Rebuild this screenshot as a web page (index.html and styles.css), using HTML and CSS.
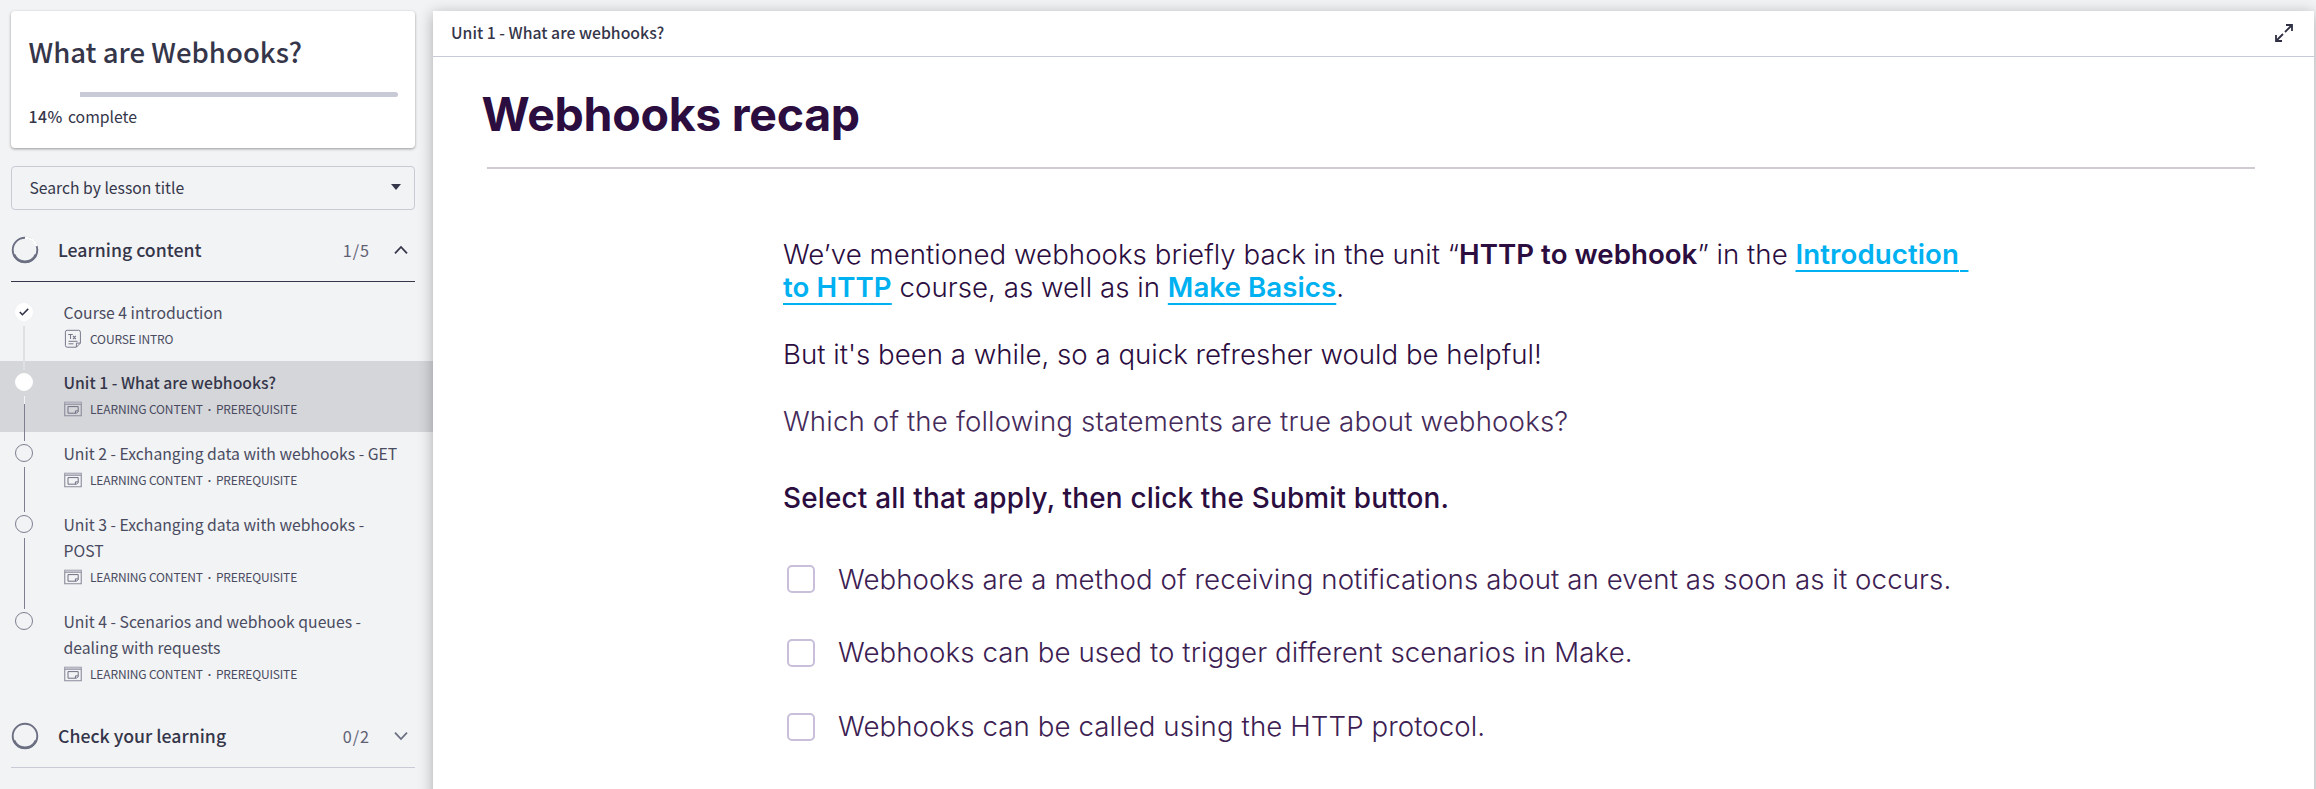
FILE: index.html
```html
<!DOCTYPE html>
<html lang="en">
<head>
<meta charset="utf-8">
<title>What are Webhooks?</title>
<link rel="stylesheet" href="styles.css">
</head>
<body>
<svg class="defs" width="0" height="0">
  <symbol id="lesson" viewBox="0 0 18 16"><path d="M.75 1.25h16.5v13.5H.75zM.75 3.2h16.5" fill="none" stroke="#8b8c9b" stroke-width="1.1"/><path d="M.75 1.2h16.5v1.6H.75z" fill="#b9bac6"/><path d="M4 5.6h10.2v5l-1.6 1.6H4z M11.4 12.2V9.9h2.8" fill="none" stroke="#6f7083" stroke-width="1"/></symbol>
</svg>
<div class="app">
  <aside class="sidebar">
    <section class="card">
      <h1>What are Webhooks?</h1>
      <div class="progress"><div class="rest"></div></div>
      <p class="complete"><b>14%</b> complete</p>
    </section>
    <div class="search"><span>Search by lesson title</span><i class="caret"></i></div>
    <div class="group open">
      <svg class="ring" width="28" height="28" viewBox="0 0 28 28"><circle cx="14" cy="14" r="12.3" fill="none" stroke="#6c6f82" stroke-width="1.9"/><path d="M3 18.5a12 12 0 0 0 22 0" fill="none" stroke="#6c6f82" stroke-width="2.6"/><path d="M14 1.7A12.3 12.3 0 0 1 25.7 10.2" fill="none" stroke="#fff" stroke-width="2.4"/></svg>
      <h2>Learning content</h2><span class="count">1/5</span>
      <svg class="chev" width="14" height="10" viewBox="0 0 14 10"><path d="M1 8.3 7 2l6 6.3" fill="none" stroke="#35364a" stroke-width="1.8"/></svg>
    </div>
    <ul class="lessons">
      <li class="done">
        <div class="rail"><i class="dot"><svg width="10" height="8" viewBox="0 0 10 8"><path d="M.8 4 3.4 6.7 9.2.9" fill="none" stroke="#2f3044" stroke-width="1.5"/></svg></i><i class="line"></i></div>
        <div class="info"><h3>Course 4 introduction</h3>
        <p class="meta"><svg width="18" height="20" viewBox="0 0 18 20"><path d="M3.2 1.3h11.4a1.8 1.8 0 0 1 1.8 1.8v11l-4 4.1H3.2a1.8 1.8 0 0 1-1.8-1.8V3.1a1.8 1.8 0 0 1 1.8-1.8zM12.4 18v-3.9h4M4.5 12.3h9M4.5 14.8h5" fill="none" stroke="#77788a" stroke-width="1"/><path d="M4.2 5.5h4.6M6.5 5.5V10M9 7l2.8 3M11.8 7 9 10" fill="none" stroke="#77788a" stroke-width="1.1"/></svg><span>COURSE INTRO</span></p></div>
      </li>
      <li class="current">
        <div class="rail"><i class="dot"></i><i class="line"></i></div>
        <div class="info"><h3>Unit 1 - What are webhooks?</h3><p class="meta"><svg width="18" height="16"><use href="#lesson"/></svg><span>LEARNING CONTENT<em>·</em>PREREQUISITE</span></p></div>
      </li>
      <li>
        <div class="rail"><i class="dot"></i><i class="line"></i></div>
        <div class="info"><h3>Unit 2 - Exchanging data with webhooks - GET</h3><p class="meta"><svg width="18" height="16"><use href="#lesson"/></svg><span>LEARNING CONTENT<em>·</em>PREREQUISITE</span></p></div>
      </li>
      <li>
        <div class="rail"><i class="dot"></i><i class="line"></i></div>
        <div class="info"><h3>Unit 3 - Exchanging data with webhooks -<br>POST</h3><p class="meta"><svg width="18" height="16"><use href="#lesson"/></svg><span>LEARNING CONTENT<em>·</em>PREREQUISITE</span></p></div>
      </li>
      <li>
        <div class="rail"><i class="dot"></i></div>
        <div class="info"><h3>Unit 4 - Scenarios and webhook queues -<br>dealing with requests</h3><p class="meta"><svg width="18" height="16"><use href="#lesson"/></svg><span>LEARNING CONTENT<em>·</em>PREREQUISITE</span></p></div>
      </li>
    </ul>
    <div class="group">
      <svg class="ring" width="28" height="28" viewBox="0 0 28 28"><circle cx="14" cy="14" r="12.3" fill="none" stroke="#6c6f82" stroke-width="1.9"/><path d="M3 18.5a12 12 0 0 0 22 0" fill="none" stroke="#6c6f82" stroke-width="2.6"/></svg>
      <h2>Check your learning</h2><span class="count">0/2</span>
      <svg class="chev" width="14" height="10" viewBox="0 0 14 10"><path d="M1 1.7 7 8l6-6.3" fill="none" stroke="#6c6f82" stroke-width="1.8"/></svg>
    </div>
  </aside>
  <main class="panel">
    <header class="bar"><span>Unit 1 - What are webhooks?</span>
      <svg width="20" height="20" viewBox="0 0 20 20"><path d="M12 2h6v6M17.5 2.5 11 9M8 18H2v-6M2.500 17.500 9 11" fill="none" stroke="#2f3044" stroke-width="1.8"/></svg>
    </header>
    <h1 class="title"><span>Webhooks recap</span></h1>
    <div class="body">
      <p class="intro">We’ve mentioned webhooks briefly back in the unit “<b>HTTP to webhook</b>” in the <a>Introduction</a><a class="gap">&nbsp;</a><br><a>to HTTP</a> course, as well as in <a>Make Basics</a>.</p>
      <p class="while">But it's been a while, so a quick refresher would be helpful!</p>
      <p class="question">Which of the following statements are true about webhooks?</p>
      <p class="select">Select all that apply, then click the Submit button.</p>
      <label class="option"><i></i><span>Webhooks are a method of receiving notifications about an event as soon as it occurs.</span></label>
      <label class="option"><i></i><span>Webhooks can be used to trigger different scenarios in Make.</span></label>
      <label class="option"><i></i><span>Webhooks can be called using the HTTP protocol.</span></label>
    </div>
  </main>
</div>
</body>
</html>
```
FILE: styles.css
```css
* { box-sizing: border-box; margin: 0; padding: 0; }
body { background: #f1f3f5; color: #35364a; font-family: "Noto Sans CJK SC", "Noto Sans CJK JP", sans-serif; overflow: hidden; }
.defs { display: block; }
h1, h2, h3 { font-weight: 400; }
i, em { font-style: normal; }
.app { display: flex; height: 789px; padding-top: 11px; overflow: hidden; }
.sidebar { width: 433px; flex: none; }

/* Course summary */
.card { width: 404px; height: 137px; margin-left: 11px; padding: 20px 17px 0 17.5px; background: #fff; border-radius: 4px; box-shadow: 0 1px 3px rgba(0,0,0,.38); }
.card h1 { font-size: 27.55px; line-height: 41px; font-weight: 500; white-space: nowrap; }
.progress { margin-top: 20px; display: flex; justify-content: flex-end; }
.rest { width: 318px; height: 5px; background: #c8cad5; border-radius: 0 3px 3px 0; }
.complete { margin-top: 8px; font-size: 15.8px; line-height: 24px; word-spacing: 1.5px; }
.complete b { font-weight: 500; letter-spacing: .5px; }
.search { width: 404px; height: 44px; margin: 18px 0 0 11px; border: 1px solid #c8cad5; border-radius: 4px; padding: 0 13px 2px 17.5px; display: flex; align-items: center; justify-content: space-between; font-size: 15.7px; }
.caret { border: 5px solid transparent; border-top: 6px solid #35364a; border-bottom: 0; }

/* Lesson groups */
.group { display: flex; align-items: center; width: 404px; height: 72px; margin-left: 11px; padding: 8px 7px 0 0; border-bottom: 1px solid #c8cad5; }
.group.open { border-color: #35364a; }
.group h2 { margin-left: 19px; flex: 1; font-size: 17.7px; line-height: 26px; margin-top: -1px; font-weight: 500; }
.count { font-size: 16.2px; letter-spacing: 1px; color: #5f6073; margin-right: -1px; }
.chev { margin-left: 25px; }
.lessons { list-style: none; padding-top: 9px; }
.lessons li { display: flex; padding-left: 15px; }
.rail { display: flex; flex-direction: column; align-items: center; width: 18px; padding-top: 12px; }
.dot { width: 18px; height: 18px; border: 1px solid #7d7e90; border-radius: 50%; display: flex; align-items: center; justify-content: center; }
.done .dot, .current .dot { background: #fff; border-color: #fff; }
.line { width: 1px; flex: 1; margin: 5px 0 -9px; background: #7d7e90; position: relative; }
.done .line { width: 2px; background: #dfe0e4; }
.current .line { background: linear-gradient(#f1f3f5 8px, #7d7e90 8px); }
.info { padding: 9px 0 11px 30.5px; color: #4a4b60; }
.info h3 { font-size: 15.76px; line-height: 26.4px; white-space: nowrap; }
.lessons .current { background: #d5d6da; height: 71px; }
.current h3 { font-weight: 500; color: #35364a; }
.meta { display: flex; align-items: center; gap: 8.5px; height: 23px; margin-top: 1px; font-size: 12px; line-height: 23px; letter-spacing: -.15px; }
.meta em { display: inline-block; width: 13px; text-align: center; font-family: "Open Sans", sans-serif; font-weight: 700; }

/* Lesson panel */
.panel { width: 1881px; height: 800px; background: #fff; box-shadow: 0 3px 14px rgba(0,0,0,.3); }
.bar { display: flex; align-items: center; justify-content: space-between; height: 46px; padding: 0 20px 2px 18px; border-bottom: 1px solid #c8cad5; font-size: 15.8px; font-weight: 500; }
.title { margin: 0 59px 0 53.5px; height: 112px; border-bottom: 2px solid #d0cbd0; font: 700 46.5px/115px Inter, sans-serif; color: #2b0d40; }
.title span { margin-left: -5px; white-space: nowrap; letter-spacing: -.3px; }
.body { padding: 69px 0 0 350px; font: 300 27.65px/33.3px Inter, sans-serif; color: #2b0d40; white-space: nowrap; }
.body b { font-weight: 600; }
.body a { font-weight: 600; color: #00b1f1; letter-spacing: .08px; text-decoration: underline 2px; text-underline-offset: 5.5px; text-decoration-skip-ink: none; }
.body .gap { margin-left: 1px; letter-spacing: 1.5px; }
.intro { margin-bottom: 33px; letter-spacing: .03px; }
.while { margin-bottom: 34px; }
.question { margin-bottom: 43.5px; letter-spacing: .15px; color: #452b5a; }
.select { font-weight: 500; font-size: 27.9px; letter-spacing: .19px; margin-bottom: 44.5px; }
.option { display: flex; align-items: center; height: 40px; margin-bottom: 33.6px; letter-spacing: .09px; padding-left: 4px; color: #3c2052; }
.option i { width: 28px; height: 28px; border: 2px solid #c9bfdb; border-radius: 5px; margin-right: 23px; }
```
